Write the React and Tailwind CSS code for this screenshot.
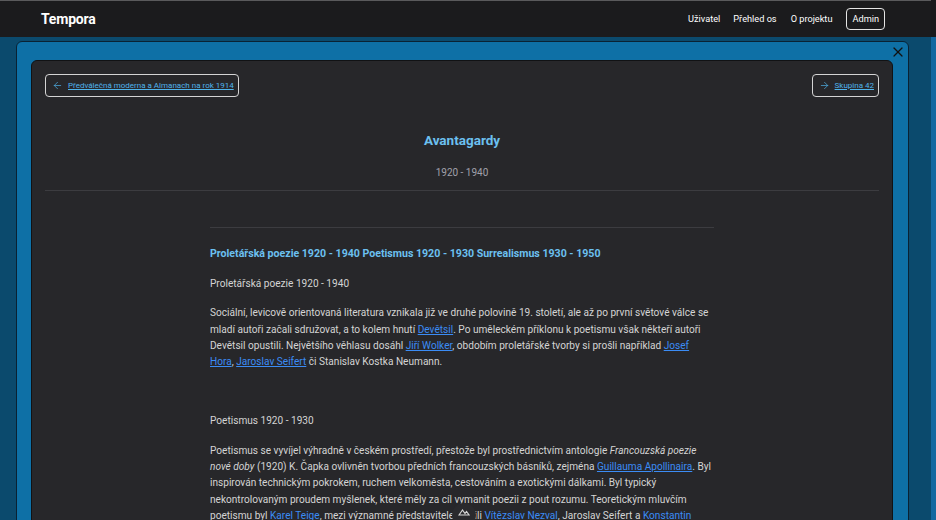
import React from 'react';
import { ArrowLeft, ArrowRight, X } from 'lucide-react';

const A = ({ children }) => (
    <a href="#" className="text-[#3b8cf5] underline">{children}</a>
);

const NavButton = ({ dir, children }) => (
    <button className="flex items-center gap-[5px] h-[23px] pl-[6px] pr-[4px] border-[1.5px] border-[#d4d4d4] rounded-[4px] text-[8px] text-[#4fb3ea]">
        {dir === 'left' && <ArrowLeft size={11} strokeWidth={1.5} />}
        {dir === 'right' && <ArrowRight size={11} strokeWidth={1.5} />}
        <span className="underline">{children}</span>
    </button>
);

export default function App() {
    return (
        <div className="h-[520px] w-[936px] overflow-hidden flex bg-[#0b4a6d] font-['Roboto',sans-serif]">
            <div className="flex-1 flex flex-col min-w-0">
                {/* Top bar */}
                <header className="h-[37px] shrink-0 bg-[#1b1b1d] border-t border-[#5a5a5c] flex items-center justify-between pl-[41px] pr-[46px]">
                    <span className="text-white font-bold text-[14px] tracking-[-0.2px]">Tempora</span>
                    <nav className="flex items-center text-[9.2px] text-white">
                        <a href="#" className="mr-[13px]">Uživatel</a>
                        <a href="#" className="mr-[14px]">Přehled os</a>
                        <a href="#" className="mr-[14px]">O projektu</a>
                        <a href="#" className="h-[22px] px-[5px] flex items-center border-[1.5px] border-[#e5e5e5] rounded-[4px]">Admin</a>
                    </nav>
                </header>

                <main className="flex-1 min-h-0 pt-[4px] pl-[16px] pr-[22px]">
                    <div className="relative h-[600px] bg-[#0e70a6] border border-[#0a2233] rounded-[6px] pt-[18px] pl-[14px] pr-[15px]">
                        <button className="absolute top-[2px] right-[2px] text-[#111]">
                            <X size={16} strokeWidth={1.8} />
                        </button>

                        <div className="h-full bg-[#27272a] border border-[#111214] rounded-[6px] px-[13px] pt-[13px]">
                            <div className="flex justify-between">
                                <NavButton dir="left">Předválečná moderna a Almanach na rok 1914</NavButton>
                                <NavButton dir="right">Skupina 42</NavButton>
                            </div>

                            <div className="text-center pt-[33px] pb-[10px] border-b border-[#3c3c40]">
                                <h1 className="text-[13.5px] font-bold text-[#6cc0f0] leading-[20px]">Avantagardy</h1>
                                <p className="mt-[15px] text-[10px] text-[#a1a1aa]">1920 - 1940</p>
                            </div>

                            <article className="w-[504px] mx-auto mt-[36px] pt-[18px] border-t border-[#3c3c40] text-[10.1px] leading-[16.3px] text-[#d4d4d4]">
                                <h2 className="text-[10.6px] font-bold text-[#6cc0f0] leading-[16px]">
                                    Proletářská poezie 1920 - 1940 Poetismus 1920 - 1930 Surrealismus 1930 - 1950
                                </h2>
                                <p className="mt-[14px]">Proletářská poezie 1920 - 1940</p>
                                <p className="mt-[13px]">
                                    Sociální, levicově orientovaná literatura vznikala již ve druhé polovině 19. století, ale až po první světové válce se
                                    mladí autoři začali sdružovat, a to kolem hnutí <A>Devětsil</A>. Po uměleckém příklonu k poetismu však někteří autoři
                                    Devětsil opustili. Největšího věhlasu dosáhl <A>Jiří Wolker</A>, obdobím proletářské tvorby si prošli například <A>Josef
                                    Hora</A>, <A>Jaroslav Seifert</A> či Stanislav Kostka Neumann.
                                </p>
                                <p className="mt-[43px]">Poetismus 1920 - 1930</p>
                                <p className="mt-[13px]">
                                    Poetismus se vyvíjel výhradně v českém prostředí, přestože byl prostřednictvím antologie <i>Francouzská poezie
                                    nové doby</i> (1920) K. Čapka ovlivněn tvorbou předních francouzských básníků, zejména <A>Guillauma Apollinaira</A>. Byl
                                    inspirován technickým pokrokem, ruchem velkoměsta, cestováním a exotickými dálkami. Byl typický
                                    nekontrolovaným proudem myšlenek, které měly za cíl vymanit poezii z pout rozumu. Teoretickým mluvčím
                                    poetismu byl <A>Karel Teige</A>, mezi významné představitele patřili <A>Vítězslav Nezval</A>, Jaroslav Seifert a <A>Konstantin
                                    Biebl</A>.
                                </p>
                            </article>
                        </div>
                    </div>
                </main>
            </div>
            {/* scrollbar strip */}
            <div className="w-[5px] shrink-0 bg-[#1a1a1c] flex flex-col">
                <div className="h-[37px]" />
                <div className="flex-1 bg-[#1468a0]" />
            </div>

            {/* floating badge */}
            <div className="absolute left-[452px] top-[503px] w-[24px] h-[24px] rounded-full bg-[#2a2a2d] flex items-start justify-center pt-[5px]">
                <svg width="12" height="8" viewBox="0 0 12 8" fill="none" stroke="#d4d4d4" strokeWidth="1.2">
                    <path d="M1 7 L4.5 2 L7 5.5 L8.5 3.5 L11 7 Z" />
                </svg>
            </div>
        </div>
    );
}
